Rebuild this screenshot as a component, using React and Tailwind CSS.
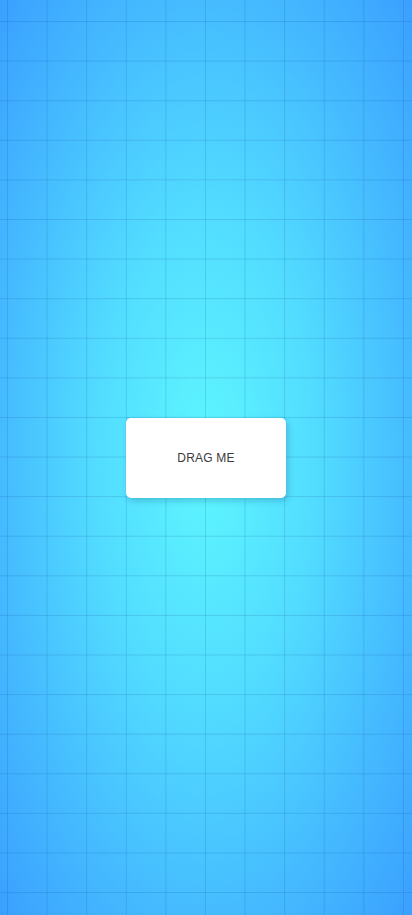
import React from 'react';

/**
 * App - a single draggable-looking card on a blue grid canvas
 */
const App = () => {
  return (
    <div
      className="relative flex h-[915px] w-full items-center justify-center overflow-hidden [background-image:linear-gradient(to_right,rgba(0,60,140,0.15)_1px,transparent_1px),linear-gradient(to_bottom,rgba(0,60,140,0.15)_1px,transparent_1px),radial-gradient(ellipse_at_center,#5ef7ff_0%,#52dcff_38%,#45baff_72%,#3aa0ff_100%)] [background-size:39.6px_39.6px,39.6px_39.6px,100%_100%] [background-position:7px_21px,7px_21px,0_0]"
    >
      {/* Card */}
      <div className="flex h-20 w-40 cursor-grab select-none items-center justify-center rounded-[5px] bg-white shadow-[2px_3px_6px_rgba(0,40,90,0.22)]">
        <span className="text-[12px] tracking-[0.2px] text-[#3a3a3a] [font-family:'Liberation_Sans',Arial,sans-serif]">
          DRAG ME
        </span>
      </div>
    </div>
  );
};

export default App;
